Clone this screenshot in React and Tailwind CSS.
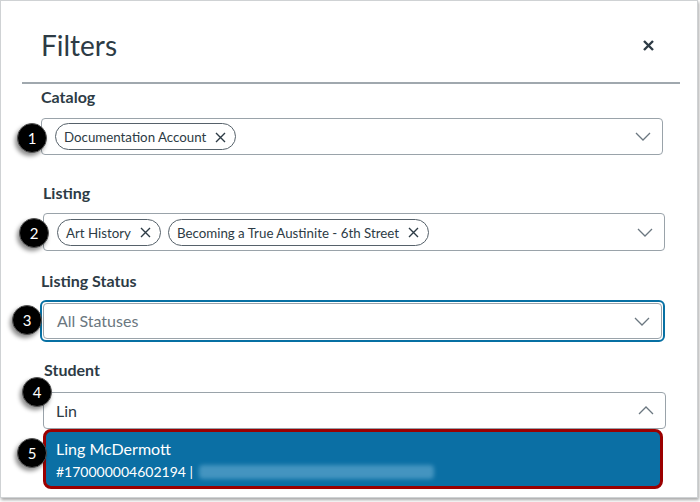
import React from 'react'

const Badge = ({ n, className }) => (
  <div
    className={`absolute w-[30px] h-[30px] rounded-full bg-black border border-[#555] text-white text-[15px] flex items-center justify-center shadow-[-2px_3px_4px_rgba(0,0,0,0.45)] ${className}`}
  >
    {n}
  </div>
)

const ChevronDown = () => (
  <svg width="16" height="9" viewBox="0 0 16 9" fill="none">
    <path d="M1 1l7 7 7-7" stroke="#6b7780" strokeWidth="1.3" />
  </svg>
)

const ChevronUp = () => (
  <svg width="16" height="9" viewBox="0 0 16 9" fill="none">
    <path d="M1 8l7-7 7 7" stroke="#6b7780" strokeWidth="1.3" />
  </svg>
)

const SmallX = () => (
  <svg width="11" height="11" viewBox="0 0 11 11" fill="none">
    <path d="M1 1l9 9M10 1l-9 9" stroke="#2d3b45" strokeWidth="1.4" />
  </svg>
)

const Chip = ({ label }) => (
  <span className="flex items-center gap-[9px] h-[27px] pl-[8px] pr-[9px] rounded-full border border-[#56616a] text-[13.3px] leading-[16px] pt-[1px] text-[#2d3b45]">
    {label}
    <SmallX />
  </span>
)

const Label = ({ children, className }) => (
  <div className={`text-[16px] leading-[20px] font-bold text-[#2d3b45] ${className}`}>
    {children}
  </div>
)

export default function App() {
  return (
    <div className="w-[700px] h-[502px] bg-white">
      <div
        className="relative w-[698px] h-[498px] bg-white border border-[#cfd2d4] shadow-[1px_2px_3px_rgba(0,0,0,0.35)] overflow-hidden"
        style={{ fontFamily: 'Lato, "Open Sans", sans-serif' }}
      >
        <div className="flex items-center justify-between pt-[26px] pl-[40px] pr-[43px]">
          <h1 className="text-[28px] leading-[36px] font-normal text-[#2d3b45]">Filters</h1>
          <svg width="11" height="11" viewBox="0 0 11 11" fill="none">
            <path d="M1 1l9 9M10 1l-9 9" stroke="#2d3b45" strokeWidth="2.4" />
          </svg>
        </div>
        <div className="mt-[19px] ml-[21px] w-[658px] h-[2px] bg-[#a0a8ae]" />

        <Label className="mt-[3px] ml-[40px]">Catalog</Label>
        <div className="mt-[11px] ml-[40px] w-[622px] h-[37px] border border-[#9aa3aa] rounded-[4px] flex items-center justify-between pl-[13px] pr-[11px]">
          <Chip label="Documentation Account" />
          <ChevronDown />
        </div>

        <Label className="mt-[28px] ml-[42px]">Listing</Label>
        <div className="mt-[10px] ml-[42px] w-[622px] h-[38px] border border-[#9aa3aa] rounded-[4px] flex items-center justify-between pl-[13px] pr-[11px]">
          <div className="flex items-center gap-[7px]">
            <Chip label="Art History" />
            <Chip label="Becoming a True Austinite - 6th Street" />
          </div>
          <ChevronDown />
        </div>

        <Label className="mt-[20px] ml-[40px]">Listing Status</Label>
        <div className="mt-[9px] ml-[39px] w-[625px] h-[42px] border-2 border-[#0770a3] rounded-[6px] p-[1px]">
          <div className="h-full border border-[#9aa3aa] rounded-[4px] flex items-center justify-between pl-[13px] pr-[11px]">
            <span className="text-[16px] text-[#6b7780]">All Statuses</span>
            <ChevronDown />
          </div>
        </div>

        <Label className="mt-[18px] ml-[43px]">Student</Label>
        <div className="mt-[12px] ml-[42px] w-[623px] h-[37px] border border-[#9aa3aa] rounded-[4px] flex items-center justify-between pl-[12px] pr-[11px]">
          <span className="text-[16px] text-[#2d3b45]">Lin</span>
          <ChevronUp />
        </div>
        <div className="ml-[42px] w-[620px] h-[60px] bg-[#0b6fa4] border-[3px] border-[#9b0000] rounded-[8px] pl-[10px] pt-[7px] text-white">
          <div className="text-[16px] leading-[20px]">Ling McDermott</div>
          <div className="mt-[4px] flex items-center text-[14px] leading-[18px]">
            <span>#170000004602194 |</span>
            <span className="ml-[6px] w-[235px] h-[14px] rounded-sm bg-[#6aaed3] opacity-60 blur-[2px]" />
          </div>
        </div>

        <Badge n="1" className="left-[16px] top-[122px]" />
        <Badge n="2" className="left-[18px] top-[217px]" />
        <Badge n="3" className="left-[11px] top-[304px]" />
        <Badge n="4" className="left-[21px] top-[376px]" />
        <Badge n="5" className="left-[16px] top-[437px]" />
      </div>
    </div>
  )
}
